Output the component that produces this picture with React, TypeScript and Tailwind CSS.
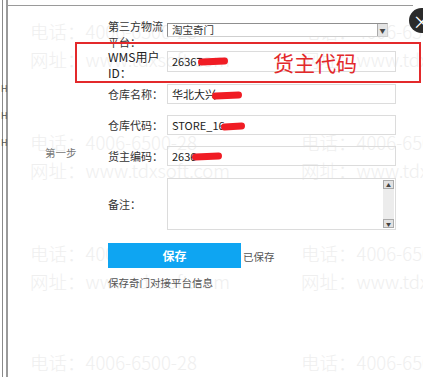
import React from 'react';

const CJK = "font-['Noto_Sans_CJK_SC','Noto_Sans',sans-serif]";

const marks = [
  { top: 21, text: '电话：4006-6500-28' },
  { top: 49, text: '网址：www.tdxsoft.com' },
  { top: 132, text: '电话：4006-6500-28' },
  { top: 160, text: '网址：www.tdxsoft.com' },
  { top: 243, text: '电话：4006-6500-28' },
  { top: 271, text: '网址：www.tdxsoft.com' },
  { top: 352, text: '电话：4006-6500-28' },
];

function Blob({ w, className = '' }: { w: number; className?: string }) {
  return (
    <span
      className={`inline-block h-[7px] rounded-full bg-[#f01c24] align-middle -rotate-3 ${className}`}
      style={{ width: w }}
    />
  );
}

function Field({ children }: { children?: React.ReactNode }) {
  return (
    <div className="flex h-[20px] w-[229px] items-center overflow-hidden whitespace-nowrap border border-[#dcdcdc] pl-[4px] text-[11px] text-[#222]">
      {children}
    </div>
  );
}

export default function App() {
  return (
    <div className={`relative h-[377px] w-[423px] overflow-hidden bg-white ${CJK}`}>
      {/* watermark, behind the form */}
      <div className="pointer-events-none absolute inset-0">
        {marks.map((m, i) => (
          <React.Fragment key={i}>
            <div className="absolute left-[30px] whitespace-nowrap text-[18.5px] font-light leading-[20px] text-[#efefef]" style={{ top: m.top }}>
              {m.text}
            </div>
            <div className="absolute left-[301px] whitespace-nowrap text-[18.5px] font-light leading-[20px] text-[#efefef]" style={{ top: m.top }}>
              {m.text}
            </div>
          </React.Fragment>
        ))}
      </div>

      {/* left frame lines */}
      <div className="absolute left-[2px] top-0 h-full w-px bg-[#8a8a8a]" />
      <div className="absolute left-[6px] top-0 h-full w-[1.5px] bg-[#9a9a9a]" />
      {[84, 111, 138].map((t) => (
        <span key={t} className="absolute left-[1px] text-[9px] leading-none text-[#555]" style={{ top: t }}>
          H
        </span>
      ))}

      {/* dialog */}
      <div className="relative ml-[7px] mt-[5px] w-[406px] border-t border-[#9a9a9a]">
        <div className="flex">
          <div className="flex w-[101px] items-center pl-[38px] text-[10.5px] text-[#777]">第一步</div>

          <div className="flex flex-col pt-[12px] text-[11px] text-[#333]">
            {/* 第三方物流平台 */}
            <div className="flex h-[33px] items-start">
              <div className="w-[59px] leading-[16px]">
                第三方物流
                <br />
                平台：
              </div>
              <div className="mt-[5px] flex h-[14px] w-[221px] items-center justify-between border border-[#8f8f8f] border-r-[#cfcfcf] border-b-[#cfcfcf] bg-white pl-[4px] text-[10.5px] text-[#333]">
                <span>淘宝奇门</span>
                <span className="flex h-[12px] w-[10px] items-center justify-center border-l border-[#aaa] bg-[#e4e4e4] text-[6px] text-[#444]">
                  ▼
                </span>
              </div>
            </div>

            {/* WMS用户ID */}
            <div className="flex h-[21px] items-center">
              <div className="mt-[6px] w-[59px] text-[12px] leading-[16px] text-[#222]">
                WMS用户
                <br />
                ID：
              </div>
              <div className="flex h-[21px] w-[229px] items-center border border-[#dcdcdc] pl-[4px] text-[11px] text-[#222]">
                26367
                <Blob w={30} className="-ml-[5px]" />
              </div>
            </div>

            <div className="mt-[12px] flex items-center">
              <div className="w-[59px]">仓库名称：</div>
              <Field>
                华北大兴
                <Blob w={30} className="-ml-[4px] mt-[2px]" />
              </Field>
            </div>

            <div className="mt-[11px] flex items-center">
              <div className="w-[59px]">仓库代码：</div>
              <Field>
                STORE_16
                <Blob w={24} className="-ml-[4px] mt-[2px]" />
              </Field>
            </div>

            <div className="mt-[11px] flex items-center">
              <div className="w-[59px]">货主编码：</div>
              <Field>
                2636
                <Blob w={30} className="-ml-[4px]" />
              </Field>
            </div>

            <div className="mt-[12px] flex items-center">
              <div className="w-[59px]">备注：</div>
              <div className="flex h-[52px] w-[229px] justify-end border border-[#dcdcdc] py-[1px] pr-[1px]">
                <div className="flex w-[11px] flex-col justify-between bg-[#ececec]">
                  <span className="flex h-[9px] items-center justify-center border border-[#aaa] bg-[#e2e2e2] text-[5px] text-[#444]">▲</span>
                  <span className="flex h-[9px] items-center justify-center border border-[#aaa] bg-[#e2e2e2] text-[5px] text-[#444]">▼</span>
                </div>
              </div>
            </div>

            <div className="mt-[13px] flex items-center">
              <button className="h-[25px] w-[133px] bg-[#0ea5f2] text-[12px] font-bold text-white">保存</button>
              <span className="ml-[2px] mt-[3px] text-[10.5px] text-[#555]">已保存</span>
            </div>

            <div className="mt-[9px] pb-[10px] text-[10.5px] leading-[12px] text-[#555]">保存奇门对接平台信息</div>
          </div>
        </div>
      </div>

      {/* annotation */}
      <div className="absolute left-[75px] top-[42px] flex h-[41px] w-[346px] items-center border-2 border-[#e3292b] pl-[196px] text-[21px] text-[#e3292b]">
        货主代码
      </div>

      {/* close button */}
      <div className="absolute left-[409px] top-[8px] flex h-[25px] w-[25px] items-center justify-center rounded-full bg-[#2b2b2b] text-[18px] leading-none text-white">
        ×
      </div>
    </div>
  );
}
